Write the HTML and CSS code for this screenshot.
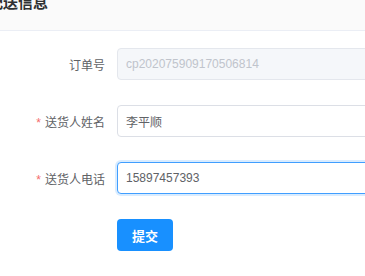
FILE: index.html
```html
<!DOCTYPE html>
<html lang="zh-CN">
<head>
<meta charset="utf-8">
<title>配送信息</title>
<link rel="stylesheet" href="styles.css">
</head>
<body>
<div class="header"><h2 class="title">配送信息</h2></div>
<form class="form">
  <div class="row">
    <label class="label">订单号</label>
    <input class="input is-disabled" value="cp202075909170506814" disabled>
  </div>
  <div class="row">
    <label class="label required">送货人姓名</label>
    <input class="input" value="李平顺">
  </div>
  <div class="row">
    <label class="label required">送货人电话</label>
    <input class="input is-focus" value="15897457393">
  </div>
  <div class="actions">
    <button type="button" class="btn-primary">提交</button>
  </div>
</form>
</body>
</html>
```

FILE: styles.css
```css
html, body {
  margin: 0;
  padding: 0;
  overflow: hidden;
  background: #fff;
}
body {
  font-family: "Liberation Sans", "Noto Sans CJK SC", sans-serif;
  color: #606266;
}
.header {
  height: 30px;
  background: #fafafa;
  border-bottom: 1px solid #ebeef5;
  overflow: hidden;
}
.title {
  margin: -8px 0 0 -12px;
  font-size: 15px;
  line-height: 22px;
  font-weight: bold;
  color: #303133;
}
.form {
  padding-top: 17px;
}
.row {
  display: flex;
  align-items: center;
  height: 32px;
  margin-bottom: 25px;
}
.label {
  box-sizing: border-box;
  width: 117px;
  flex: none;
  padding-right: 12px;
  text-align: right;
  font-size: 12px;
  color: #606266;
}
.required::before {
  content: "*";
  color: #f56c6c;
  margin-right: 4px;
}
.input {
  box-sizing: border-box;
  flex: none;
  width: 270px;
  height: 32px;
  margin: 0;
  padding: 0 8px;
  border: 1px solid #dcdfe6;
  border-radius: 4px;
  background: #fff;
  font-family: inherit;
  font-size: 12px;
  color: #606266;
  outline: none;
}
.input.is-disabled {
  background: #f5f7fa;
  border-color: #e4e7ed;
  color: #c0c4cc;
  -webkit-text-fill-color: #c0c4cc;
  opacity: 1;
}
.input.is-focus {
  border-color: #409eff;
  box-shadow: 0 0 0 2px rgba(64, 158, 255, 0.2);
}
.actions {
  padding-left: 117px;
}
.btn-primary {
  width: 56px;
  height: 32px;
  padding: 0;
  border: none;
  border-radius: 4px;
  background: #1890ff;
  color: #fff;
  font-family: inherit;
  font-size: 13px;
  font-weight: bold;
}
```
